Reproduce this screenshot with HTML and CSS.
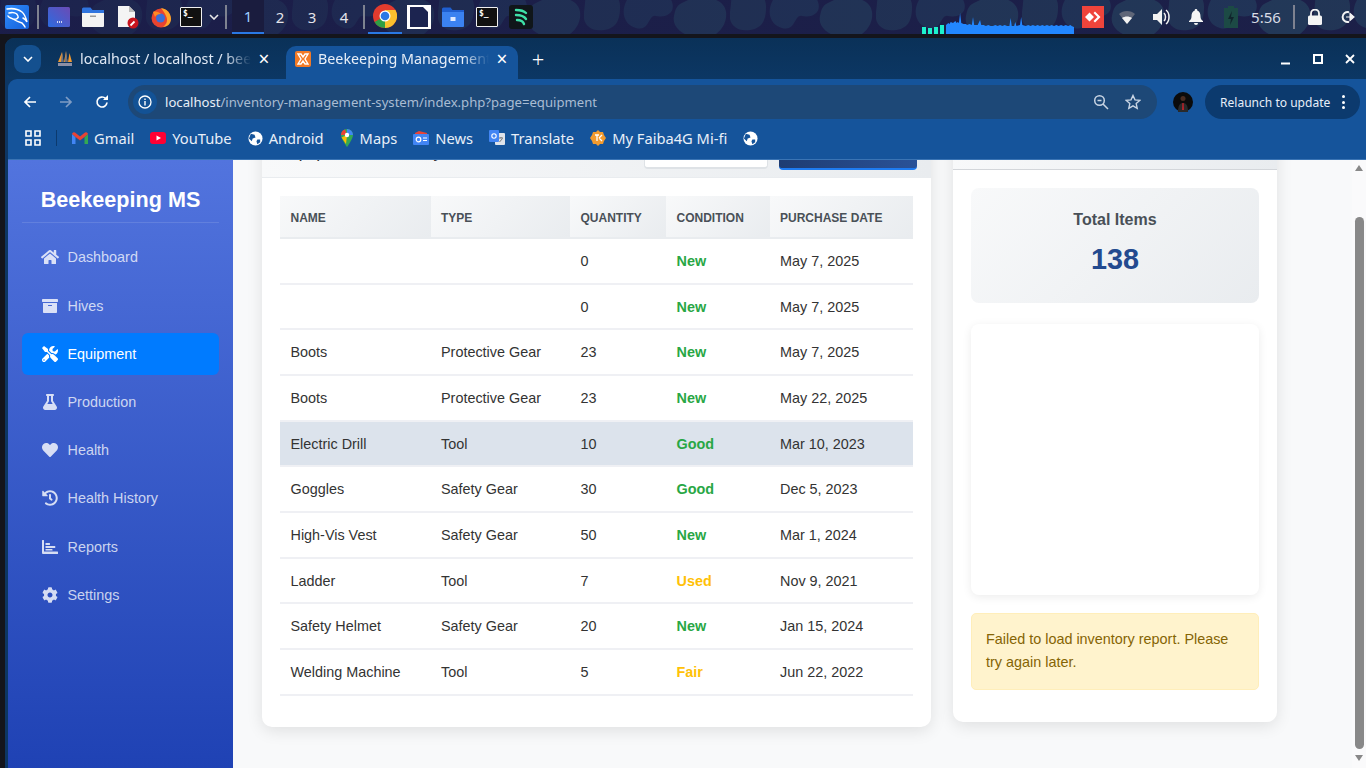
FILE: index.html
```html
<!DOCTYPE html>
<html lang="en">
<head>
<meta charset="utf-8">
<title>Beekeeping Management</title>
<link rel="stylesheet" href="styles.css">
</head>
<body>
<header class="taskbar">
  <svg class="wall" width="1366" height="34" aria-hidden="true">
    <defs>
      <pattern id="blobs" width="146" height="64" patternUnits="userSpaceOnUse">
        <path d="M6 -8c16-6 30 2 30 14s-2 22-16 24-22-6-20-18 0-17 6-20z" fill="#233a58"/>
        <path d="M48 -12c20-2 36 2 40 14s-8 16-16 14-6 16-20 12-14-18-10-26 0-13 6-14z" fill="#22395a"/>
        <path d="M100 2c14-8 40-6 42 10s-14 30-30 26-24-12-22-22 4-11 10-14z" fill="#243e5b"/>
        <path d="M24 40c14-6 38-4 40 8s-16 18-30 16-24-20-10-24z" fill="#22395a"/>
        <path d="M80 36c10-2 22 2 24 10s-8 16-18 14-16-22-6-24z" fill="#233a58"/>
      </pattern>
      <linearGradient id="fade" x1="0" x2="1" y1="0" y2="0">
        <stop offset="0" stop-color="#1b1d4a" stop-opacity=".8"/>
        <stop offset=".4" stop-color="#1b1d4a" stop-opacity=".45"/>
        <stop offset="1" stop-color="#1b1d4a" stop-opacity=".15"/>
      </linearGradient>
    </defs>
    <rect width="1366" height="34" fill="url(#blobs)"/>
    <rect width="1366" height="34" fill="url(#fade)"/>
  </svg>

  <div class="slot s-kali">
    <svg viewBox="0 0 24 24" width="24" height="24"><defs><linearGradient id="kali" x1="0" x2="1" y1="0" y2="1"><stop offset="0" stop-color="#2f8cff"/><stop offset="1" stop-color="#1560d8"/></linearGradient></defs><rect width="24" height="24" rx="2" fill="url(#kali)"/><path d="M2 4c6-1 11 0 15 3 3 2.500 4 6 5 10-1-2-2-3-4-4M4 8c4-1 8 0 9 3 1 2-2 4-5 3 3 2 6 3 9 4 1 1 2 2 3 4M8 14c-2-1-4-1-5-3" fill="none" stroke="#fff" stroke-width="1.500" stroke-linecap="round"/></svg>
  </div>
  <span class="tsep"></span>
  <div class="slot"><svg viewBox="0 0 22 20" width="22" height="20"><defs><linearGradient id="app1" x1="0" x2="1" y1="1" y2="0"><stop offset="0" stop-color="#2d6be0"/><stop offset="1" stop-color="#6b4bb5"/></linearGradient></defs><rect width="22" height="20" rx="1.500" fill="url(#app1)"/><path d="M9 15h5" stroke="#fff" stroke-width="1.500" stroke-dasharray="1 1"/></svg></div>
  <div class="slot"><svg viewBox="0 0 22 20" width="22" height="20"><path d="M0 2a1.500 1.500 0 0 1 1.500-1.500h7l2 2.500H22v5H0z" fill="#2f74df"/><path d="M0 6h22v13a1 1 0 0 1-1 1H1a1 1 0 0 1-1-1z" fill="#f3f3f3"/><rect x="8" y="8.500" width="6" height="1.500" fill="#9a9a9a"/></svg></div>
  <div class="slot s-doc"><svg viewBox="0 0 22 24" width="22" height="24"><path d="M1 1h11l6 6v15H1z" fill="#f4f4f4"/><path d="M12 1l6 6h-6z" fill="#bbb"/><circle cx="16" cy="18" r="5.500" fill="#c8141e"/><path d="M13.500 20.500l4-4" stroke="#fff" stroke-width="1.800"/></svg></div>
  <div class="slot s-fox"><svg viewBox="0 0 22 22" width="22" height="22"><circle cx="11" cy="12" r="9.500" fill="#e8442f"/><path d="M11 2c6 1 10 5 10 11 0 5-4 8-8 8 4-3 5-7 3-11-1-3-3-5-5-8z" fill="#ffa52a"/><circle cx="10.500" cy="12" r="4.500" fill="#3a6fd8"/><path d="M3 6c3-1 6 0 8 2-3 0-5 1-6 3z" fill="#ff8a24"/></svg></div>
  <div class="slot s-term"><span class="term">$_</span></div>
  <div class="slot s-chev"><svg viewBox="0 0 10 6" width="10" height="6"><path d="M1 1l4 4 4-4" fill="none" stroke="#e8e8e8" stroke-width="1.600"/></svg></div>
  <span class="tsep s-sep2"></span>
  <nav class="workspaces">
    <span class="ws ws-on">1</span><span class="ws">2</span><span class="ws">3</span><span class="ws">4</span>
  </nav>
  <span class="tsep s-sep3"></span>
  <div class="slot s-chrome"><svg viewBox="0 0 24 24" width="24" height="24"><circle cx="12" cy="12" r="12" fill="#e33b2e"/><path d="M12 12L1.600 18A12 12 0 0 0 12 24c1 0 2 0 3-.4z" fill="#2f9e44"/><path d="M12 6h10.400A12 12 0 0 1 12 24z" fill="#fbc02d"/><circle cx="12" cy="12" r="5.500" fill="#fff"/><circle cx="12" cy="12" r="4.300" fill="#2a78e4"/></svg></div>
  <div class="slot"><svg viewBox="0 0 24 24" width="24" height="24"><rect width="24" height="24" fill="#fff"/><path d="M3 2h13l5 5v15H3z" fill="#1c2450"/></svg></div>
  <div class="slot"><svg viewBox="0 0 22 20" width="22" height="20"><path d="M0 2a1.500 1.500 0 0 1 1.500-1.500h7l2 2.500H22v3H0z" fill="#1f5fd0"/><path d="M0 5h22v14a1 1 0 0 1-1 1H1a1 1 0 0 1-1-1z" fill="#3b82f0"/><rect x="8.500" y="10" width="5" height="4" fill="#dfeaff"/></svg></div>
  <div class="slot"><span class="term">$_</span></div>
  <div class="slot"><span class="spiral"><svg viewBox="0 0 14 18" width="14" height="18"><path d="M2 2c4 0 8 1 10 3M2 7c4 0 8 1 10 4M3 12c3 0 6 1 7 4" fill="none" stroke="#3fe0a8" stroke-width="2.400" stroke-linecap="round"/></svg></span></div>

  <div class="tray">
    <span class="netbars"><i class="nb1"></i><i class="nb2"></i><i class="nb3"></i><i class="nb4"></i></span>
    <svg class="graph" viewBox="0 0 109 22" width="128" height="22" preserveAspectRatio="none"><path d="M0 22V13l2-2 1 1 1-2 2 1 2-2 1 2 1-1 1 1 1-10 1 10 2 1 2 0 1 1 2-1 2 1 1-8 1 8 3 0 2-5 1 5 2 0 2 1 2-1 2 1 2 0 2-1 2 1 2-1 2 1 2-1 2 1 2 0 1-8 1 8 2 0 1-4 1 4 3-1 1-8 1 8 3 1 2-1 2 1 2-1 2 1 2-1 2 1 2-1 2 1 2-1 2 1 2-1 2 1 2-1 2 1 2-1 2 1 2-1 2 1 2-1 1 1 2 1V22z" fill="#2287ff"/></svg>
    <div class="slot s-any"><svg viewBox="0 0 22 22" width="22" height="22"><rect width="22" height="22" fill="#ef443b"/><path d="M3 11l4.500-4.500L12 11l-4.500 4.500zM13 5.500l5.500 5.500-5.500 5.500-1.500-1.500 4-4-4-4z" fill="#fff"/></svg></div>
    <div class="slot s-wifi"><svg viewBox="0 0 16 14" width="16" height="14"><path d="M0 4c4-4 12-4 16 0l-8 10z" fill="#5f6678"/><path d="M3 8c3-2 7-2 10 0l-5 6z" fill="#f2f2f2"/></svg></div>
    <div class="slot s-vol"><svg viewBox="0 0 18 18" width="18" height="18"><path d="M0 6h4l5-5v16l-5-5H0z" fill="#f2f2f2"/><path d="M11 5c2 2 2 6 0 8M13 2c4 3 4 11 0 14" fill="none" stroke="#f2f2f2" stroke-width="1.500"/></svg></div>
    <div class="slot s-bell"><svg viewBox="0 0 14 16" width="14" height="16"><path d="M7 0a1.200 1.200 0 0 1 1.200 1.500C11 2.500 11.500 5 11.500 7.500c0 2 1 3.500 2.500 4.500v1H0v-1c1.500-1 2.500-2.500 2.500-4.500 0-2.500.5-5 3.300-6A1.200 1.200 0 0 1 7 0zM5 14h4a2 2 0 0 1-4 0z" fill="#f4f4f4"/></svg></div>
    <div class="slot s-batt"><svg viewBox="0 0 14 22" width="14" height="22"><path d="M4 0h6v2h4v20H0V2h4z" fill="#1c4a45"/><path d="M8 5l-4 8h3l-1 6 4-8H7z" fill="#10242c"/></svg></div>
    <span class="clock">5:56</span>
    <span class="tsep s-sep4"></span>
    <div class="slot s-lock"><svg viewBox="0 0 14 16" width="14" height="16"><path d="M3 7V4.500a4 4 0 0 1 8 0V7" fill="none" stroke="#f4f4f4" stroke-width="1.800"/><rect y="6.500" width="14" height="9.500" rx="1.500" fill="#f4f4f4"/></svg></div>
    <div class="slot s-out"><svg viewBox="0 0 16 14" width="16" height="14"><path d="M9 2.200a5 5 0 1 0 0 9.600" fill="none" stroke="#f4f4f4" stroke-width="2"/><path d="M6 7h6M10 3.500L14 7l-4 3.500z" fill="#f4f4f4" stroke="#f4f4f4" stroke-width="1.200"/></svg></div>
  </div>
</header>

<div class="window">
  <div class="tabstrip">
    <button class="tabsearch"><svg viewBox="0 0 10 6" width="10" height="6"><path d="M1 1l4 4 4-4" fill="none" stroke="#fff" stroke-width="1.600"/></svg></button>
    <div class="tab tab-off">
      <svg class="favicon" viewBox="0 0 16 16" width="16" height="16"><path d="M1 11L5 1l1.500 10zM7 11L9 0l1.500 11zM11 11l1.500-9L15 11z" fill="#f29a2e"/><path d="M5 1L4 11h2.500zM9 0L8 11h2.500z" fill="#6b6f80"/><rect x="1" y="12" width="14" height="3" fill="#8b8fa5"/></svg>
      <span class="tabtitle">localhost / localhost / beekeeping</span>
      <span class="tabx">×</span>
    </div>
    <div class="tab tab-on">
      <svg class="favicon" viewBox="0 0 16 16" width="16" height="16"><rect width="16" height="16" rx="2" fill="#f27a26"/><path d="M3 3h3l2 3 2-3h3l-3 5 3 5h-3L8 10l-2 3H3l3-5z" fill="none" stroke="#fff" stroke-width="1.400"/></svg>
      <span class="tabtitle">Beekeeping Management System</span>
      <span class="tabx">×</span>
    </div>
    <span class="newtab">+</span>
    <div class="winctl">
      <svg viewBox="0 0 12 12" width="12" height="12"><path d="M1 10.500h9" stroke="#fff" stroke-width="2"/></svg>
      <svg viewBox="0 0 12 12" width="12" height="12"><rect x="2" y="2" width="8" height="8" fill="none" stroke="#fff" stroke-width="2"/></svg>
      <svg viewBox="0 0 12 12" width="12" height="12"><path d="M2 2l8 8M10 2l-8 8" stroke="#fff" stroke-width="1.800"/></svg>
    </div>
  </div>

  <div class="frame">
    <div class="toolbar">
      <span class="navbtn"><svg viewBox="0 0 14 14" width="14" height="14"><path d="M13 7H2M7 2L2 7l5 5" fill="none" stroke="#fff" stroke-width="1.700"/></svg></span>
      <span class="navbtn"><svg viewBox="0 0 14 14" width="14" height="14"><path d="M1 7h11M7 2l5 5-5 5" fill="none" stroke="#7f9cc4" stroke-width="1.700"/></svg></span>
      <span class="navbtn"><svg viewBox="0 0 14 14" width="14" height="14"><path d="M12 7.500A5 5 0 1 1 10.500 3.400" fill="none" stroke="#fff" stroke-width="1.700"/><path d="M8 5h5V0z" fill="#fff"/></svg></span>
      <div class="omnibox">
        <span class="siteinfo"><svg viewBox="0 0 14 14" width="14" height="14"><circle cx="7" cy="7" r="6" fill="none" stroke="#fff" stroke-width="1.300"/><path d="M7 6v4.500M7 3.500v1.500" stroke="#fff" stroke-width="1.400"/></svg></span>
        <span class="url"><b>localhost</b>/inventory-management-system/index.php?page=equipment</span>
        <svg class="zoomi" viewBox="0 0 16 16" width="16" height="16"><circle cx="6.500" cy="6.500" r="4.800" fill="none" stroke="#c9d5e4" stroke-width="1.500"/><path d="M10 10l5 5M4.500 6.500h4" stroke="#c9d5e4" stroke-width="1.500"/></svg>
        <svg class="star" viewBox="0 0 16 16" width="16" height="16"><path d="M8 1.500l2 4.400 4.800.5-3.600 3.200 1 4.700L8 11.900l-4.200 2.400 1-4.700L1.200 6.400 6 5.900z" fill="none" stroke="#c9d5e4" stroke-width="1.400"/></svg>
      </div>
      <span class="avatar"><svg viewBox="0 0 20 20" width="20" height="20"><circle cx="10" cy="10" r="10" fill="#0b0b0b"/><circle cx="10" cy="6.500" r="2.500" fill="#4a2c20"/><path d="M5 20c0-7 2-9 5-9s5 2 5 9z" fill="#2a2a2a"/><path d="M9.300 11h1.400l.3 7H9z" fill="#b4232a"/></svg></span>
      <div class="relaunch"><span>Relaunch to update</span><span class="dots"><i></i><i></i><i></i></span></div>
    </div>

    <div class="bookmarks">
      <svg viewBox="0 0 16 16" width="16" height="16"><path d="M1 1h5v5H1zM10 1h5v5h-5zM1 10h5v5H1zM10 10h5v5h-5z" fill="none" stroke="#fff" stroke-width="1.600"/></svg>
      <span class="bmsep"></span>
      <a class="bm bm-first"><svg viewBox="0 0 16 12" width="16" height="12"><path d="M0 2v10h3.500V5z" fill="#4285f4"/><path d="M12.500 5v7H16V2z" fill="#34a853"/><path d="M0 2a2 2 0 0 1 3-1.500l5 4 5-4A2 2 0 0 1 16 2l-3.500 3L8 8.500 3.500 5z" fill="#ea4335"/></svg>Gmail</a>
      <a class="bm"><svg viewBox="0 0 16 12" width="16" height="12"><rect width="16" height="12" rx="3" fill="#ff0033"/><path d="M6.500 3.500v5L11 6z" fill="#fff"/></svg>YouTube</a>
      <a class="bm"><svg viewBox="0 0 16 16" width="15" height="15"><circle cx="8" cy="8" r="7.500" fill="#fff"/><path d="M3 3l4 1 1 3-3 1-1 3-3-3zM10 9l3 0 0 3-3 2-1-3z" fill="#15549b"/></svg>Android</a>
      <a class="bm"><svg viewBox="0 0 14 18" width="14" height="18"><path d="M7 0a6 6 0 0 0-6 6c0 4 6 12 6 12s6-8 6-12a6 6 0 0 0-6-6z" fill="#34a853"/><path d="M7 0a6 6 0 0 1 6 6l-6 0z" fill="#4285f4"/><path d="M1 6a6 6 0 0 1 4-5.600L7 6z" fill="#ea4335"/><path d="M1.500 8.500L7 6l-1 9z" fill="#fbbc04"/><circle cx="7" cy="6" r="2.200" fill="#fff"/></svg>Maps</a>
      <a class="bm"><svg viewBox="0 0 16 16" width="16" height="16"><path d="M2 3l4-2 8 2v3H2z" fill="#ea4335"/><rect x="0" y="4" width="16" height="11" rx="1" fill="#4285f4"/><path d="M10 8h4M10 10.500h4" stroke="#fff"/><circle cx="5.500" cy="9.500" r="2.300" fill="none" stroke="#fff" stroke-width="1.200"/></svg>News</a>
      <a class="bm"><svg viewBox="0 0 16 16" width="16" height="16"><rect x="6" y="3" width="10" height="12" rx="1" fill="#dfe3ea"/><rect width="10" height="12" rx="1" fill="#4285f4"/><circle cx="5" cy="6" r="2.200" fill="none" stroke="#fff" stroke-width="1.100"/><path d="M10 8h4M12 7v1M10.500 12l3-3.500" stroke="#777"/></svg>Translate</a>
      <a class="bm"><svg viewBox="0 0 16 16" width="16" height="16"><path d="M8 0l2 2h3l1 3 2 3-2 3-1 3h-3l-2 2-2-2H3l-1-3-2-3 2-3 1-3h3z" fill="#f29a2e"/><path d="M5 5h4M7 5v6M9 8l3-3M9 8l3 3" stroke="#fff" stroke-width="1.300" fill="none"/></svg>My Faiba4G Mi-fi</a>
      <a class="bm"><svg viewBox="0 0 16 16" width="15" height="15"><circle cx="8" cy="8" r="7.500" fill="#fff"/><path d="M3 3l4 1 1 3-3 1-1 3-3-3zM10 9l3 0 0 3-3 2-1-3z" fill="#15549b"/></svg></a>
    </div>

    <div class="page">
      <aside class="sidebar">
        <h1 class="brand">Beekeeping MS</h1>
        <ul class="nav">
          <li><a class="navlink"><span class="ico"><svg viewBox="0 0 576 512"><path d="M280.37 148.26L96 300.11V464a16 16 0 0 0 16 16l112.06-.29a16 16 0 0 0 15.92-16V368a16 16 0 0 1 16-16h64a16 16 0 0 1 16 16v95.64a16 16 0 0 0 16 16.05L464 480a16 16 0 0 0 16-16V300L295.67 148.26a12.19 12.19 0 0 0-15.3 0zM571.6 251.47L488 182.56V44.05a12 12 0 0 0-12-12h-56a12 12 0 0 0-12 12v72.61L318.47 43a48 48 0 0 0-61 0L4.34 251.47a12 12 0 0 0-1.6 16.9l25.5 31A12 12 0 0 0 45.15 301l235.22-193.74a12.19 12.19 0 0 1 15.3 0L530.9 301a12 12 0 0 0 16.9-1.6l25.5-31a12 12 0 0 0-1.7-16.93z"/></svg></span>Dashboard</a></li>
          <li><a class="navlink"><span class="ico"><svg viewBox="0 0 512 512"><path d="M32 448c0 17.7 14.300 32 32 32h384c17.700 0 32-14.300 32-32V160H32v288zm160-212c0-6.600 5.400-12 12-12h104c6.600 0 12 5.400 12 12v8c0 6.600-5.400 12-12 12H204c-6.600 0-12-5.400-12-12v-8zM480 32H32C14.300 32 0 46.300 0 64v48c0 8.800 7.200 16 16 16h480c8.800 0 16-7.200 16-16V64c0-17.700-14.300-32-32-32z"/></svg></span>Hives</a></li>
          <li><a class="navlink active"><span class="ico"><svg viewBox="0 0 512 512"><path d="M501.100 395.700L384 278.600c-23.100-23.100-57.600-27.600-85.400-13.900L192 158.100V96L64 0 0 64l96 128h62.100l106.600 106.600c-13.600 27.800-9.200 62.300 13.900 85.400l117.100 117.100c14.600 14.600 38.200 14.600 52.700 0l52.700-52.700c14.500-14.600 14.500-38.200 0-52.700zM331.700 225c28.300 0 54.900 11 74.900 31l19.400 19.400c15.800-6.900 30.800-16.500 43.800-29.500 37.100-37.100 49.700-89.300 37.900-136.700-2.200-9-13.500-12.100-20.100-5.500l-74.400 74.400-67.900-11.300L334 98.900l74.400-74.400c6.600-6.600 3.400-17.900-5.700-20.200-47.400-11.700-99.600.9-136.600 37.900-28.500 28.500-41.900 66.100-41.200 103.600l82.100 82.100c8.100-1.900 16.500-2.900 24.700-2.900zm-103.900 82l-56.700-56.700L18.700 402.800c-25 25-25 65.500 0 90.500s65.500 25 90.500 0l123.600-123.600c-7.600-19.900-9.900-41.600-5-62.700zM64 472c-13.200 0-24-10.800-24-24 0-13.300 10.700-24 24-24s24 10.700 24 24c0 13.200-10.700 24-24 24z"/></svg></span>Equipment</a></li>
          <li><a class="navlink"><span class="ico"><svg viewBox="0 0 448 512"><path d="M437.200 403.500L320 215V64h8c13.300 0 24-10.700 24-24V24c0-13.300-10.700-24-24-24H120c-13.300 0-24 10.700-24 24v16c0 13.300 10.700 24 24 24h8v151L10.800 403.500C-18.500 450.600 15.300 512 70.900 512h306.200c55.700 0 89.400-61.500 60.100-108.500zM137.900 320l48.200-77.600c3.700-5.200 5.800-11.600 5.800-18.400V64h64v160c0 6.900 2.200 13.200 5.800 18.400l48.200 77.600h-172z"/></svg></span>Production</a></li>
          <li><a class="navlink"><span class="ico"><svg viewBox="0 0 512 512"><path d="M462.300 62.600C407.500 15.900 326 24.300 275.700 76.200L256 96.500l-19.700-20.300C186.100 24.300 104.500 15.900 49.700 62.600c-62.800 53.600-66.100 149.800-9.900 207.900l193.500 199.800c12.500 12.900 32.800 12.900 45.300 0l193.500-199.800c56.300-58.100 53-154.300-9.800-207.900z"/></svg></span>Health</a></li>
          <li><a class="navlink"><span class="ico"><svg viewBox="0 0 512 512"><path d="M504 255.531c.253 136.640-111.180 248.372-247.820 248.468-59.015.042-113.223-20.530-155.822-54.911-11.077-8.940-11.905-25.541-1.839-35.607l11.267-11.267c8.609-8.609 22.353-9.551 31.891-1.984C173.062 425.135 212.781 440 256 440c101.705 0 184-82.311 184-184 0-101.705-82.311-184-184-184-48.814 0-93.149 18.969-126.068 49.932l50.754 50.754c10.080 10.080 2.941 27.314-11.313 27.314H24c-8.837 0-16-7.163-16-16V38.627c0-14.254 17.234-21.393 27.314-11.314l49.372 49.372C129.209 34.136 189.552 8 256 8c136.810 0 247.747 110.780 248 247.531zm-180.912 78.784l9.823-12.630c8.138-10.463 6.253-25.542-4.210-33.679L288 256.349V152c0-13.255-10.745-24-24-24h-16c-13.255 0-24 10.745-24 24v135.651l65.409 50.874c10.463 8.137 25.541 6.253 33.679-4.210z"/></svg></span>Health History</a></li>
          <li><a class="navlink"><span class="ico"><svg viewBox="0 0 512 512"><path d="M0 48a16 16 0 0 1 16-16h32a16 16 0 0 1 16 16v352h432a16 16 0 0 1 16 16v48a16 16 0 0 1-16 16H32a32 32 0 0 1-32-32zM112 128h130a14 14 0 0 1 14 14v36a14 14 0 0 1-14 14H112zM112 224h300a14 14 0 0 1 14 14v36a14 14 0 0 1-14 14H112zM112 320h210a14 14 0 0 1 14 14v36H112z"/></svg></span>Reports</a></li>
          <li><a class="navlink"><span class="ico"><svg viewBox="0 0 512 512"><path d="M487.400 315.700l-42.600-24.600c4.300-23.200 4.300-47 0-70.200l42.600-24.600c4.900-2.800 7.100-8.600 5.500-14-11.100-35.600-30-67.800-54.700-94.600-3.800-4.100-10-5.100-14.800-2.300L380.800 110c-17.900-15.400-38.500-27.300-60.800-35.100V25.800c0-5.600-3.900-10.500-9.400-11.700-36.700-8.200-74.300-7.800-109.200 0-5.500 1.200-9.400 6.100-9.400 11.700V75c-22.200 7.900-42.800 19.800-60.800 35.100L88.700 85.500c-4.900-2.800-11-1.900-14.800 2.300-24.700 26.700-43.600 58.900-54.700 94.600-1.700 5.400.6 11.200 5.500 14L67.300 221c-4.300 23.200-4.300 47 0 70.200l-42.600 24.600c-4.900 2.800-7.100 8.600-5.500 14 11.100 35.600 30 67.800 54.700 94.600 3.800 4.100 10 5.100 14.800 2.300l42.600-24.600c17.900 15.400 38.500 27.300 60.800 35.100v49.200c0 5.600 3.900 10.500 9.400 11.700 36.700 8.200 74.300 7.800 109.200 0 5.500-1.200 9.400-6.100 9.400-11.700v-49.200c22.200-7.900 42.800-19.800 60.800-35.100l42.600 24.600c4.900 2.800 11 1.900 14.800-2.300 24.700-26.700 43.600-58.900 54.700-94.600 1.500-5.500-.7-11.300-5.600-14.100zM256 336c-44.100 0-80-35.900-80-80s35.900-80 80-80 80 35.900 80 80-35.900 80-80 80z"/></svg></span>Settings</a></li>
        </ul>
      </aside>

      <main class="main">
        <section class="card card-list">
          <div class="card-head">
            <h2 class="card-title">Equipment Inventory</h2>
            <div class="head-tools">
              <div class="filter">All Types</div>
              <button class="btn-add">Add Equipment</button>
            </div>
          </div>
          <div class="card-body">
            <table class="grid">
              <colgroup><col class="c1"><col class="c2"><col class="c3"><col class="c4"><col class="c5"></colgroup>
              <thead><tr><th>Name</th><th>Type</th><th>Quantity</th><th>Condition</th><th>Purchase Date</th></tr></thead>
              <tbody>
                <tr><td></td><td></td><td>0</td><td class="ok">New</td><td>May 7, 2025</td></tr>
                <tr><td></td><td></td><td>0</td><td class="ok">New</td><td>May 7, 2025</td></tr>
                <tr><td>Boots</td><td>Protective Gear</td><td>23</td><td class="ok">New</td><td>May 7, 2025</td></tr>
                <tr><td>Boots</td><td>Protective Gear</td><td>23</td><td class="ok">New</td><td>May 22, 2025</td></tr>
                <tr class="hover"><td>Electric Drill</td><td>Tool</td><td>10</td><td class="ok">Good</td><td>Mar 10, 2023</td></tr>
                <tr><td>Goggles</td><td>Safety Gear</td><td>30</td><td class="ok">Good</td><td>Dec 5, 2023</td></tr>
                <tr><td>High-Vis Vest</td><td>Safety Gear</td><td>50</td><td class="ok">New</td><td>Mar 1, 2024</td></tr>
                <tr><td>Ladder</td><td>Tool</td><td>7</td><td class="warn">Used</td><td>Nov 9, 2021</td></tr>
                <tr><td>Safety Helmet</td><td>Safety Gear</td><td>20</td><td class="ok">New</td><td>Jan 15, 2024</td></tr>
                <tr><td>Welding Machine</td><td>Tool</td><td>5</td><td class="warn">Fair</td><td>Jun 22, 2022</td></tr>
              </tbody>
            </table>
          </div>
        </section>

        <section class="card card-side">
          <div class="card-head card-head-side"><h2 class="card-title">Inventory Report</h2></div>
          <div class="card-body">
            <div class="stat">
              <h3 class="stat-label">Total Items</h3>
              <div class="stat-value">138</div>
            </div>
            <div class="chart"></div>
            <div class="alert">Failed to load inventory report. Please try again later.</div>
          </div>
        </section>
      </main>

      <div class="scrollbar">
        <span class="arrow-up"></span>
        <span class="thumb"></span>
        <span class="arrow-down"></span>
      </div>
    </div>
  </div>
</div>
</body>
</html>
```

FILE: styles.css
```css
* { box-sizing: border-box; }
html, body { margin: 0; padding: 0; height: 100%; }
body {
  width: 1366px; height: 768px; overflow: hidden;
  background: #14151c;
  display: flex; flex-direction: column;
  font-family: "Liberation Sans", Arial, sans-serif;
}
svg { display: block; flex: none; }

/* desktop panel */
.taskbar {
  position: relative; height: 34px; flex: none;
  background: #1c2048;
  display: flex; align-items: center;
  color: #f2f2f2;
  font-family: "Noto Sans", sans-serif;
}
.wall { position: absolute; left: 0; top: 0; }
.slot { position: relative; width: 34px; height: 34px; display: flex; align-items: center; justify-content: center; flex: none; }
.tsep { position: relative; width: 2px; height: 24px; background: #7e8290; flex: none; margin: 0 3px; }
.s-sep2 { margin: 0 4px 0 3px; }
.s-sep3 { margin: 0 3px; }
.s-doc { width: 35px; }
.s-fox { width: 32px; }
.s-term { width: 28px; }
.s-chev { width: 17px; }
.term {
  width: 22px; height: 20px; background: #111; border: 1px solid #f0f0f0;
  font: 700 8px/12px "DejaVu Sans Mono", monospace; color: #fff; padding-left: 2px; display: block; border-radius: 1px;
}
.spiral { width: 24px; height: 24px; background: #10161a; border-radius: 3px; display: flex; align-items: center; justify-content: center; }
.workspaces { position: relative; display: flex; height: 34px; flex: none; margin-left: 1px; }
.ws { width: 32px; height: 34px; display: flex; align-items: center; justify-content: center; font-size: 15px; color: #e4e4ea; padding-bottom: 1px; }
.ws-on { background: #1a1c3e; border-bottom: 2px solid #2a78e4; color: #9fd0ff; }
.s-chrome { border-bottom: 2px solid #2a78e4; }
.tray { position: relative; margin-left: auto; display: flex; align-items: center; height: 34px; padding-right: 2px; }
.netbars { display: flex; align-items: flex-end; gap: 2px; height: 34px; margin-right: 2px; }
.netbars i { display: block; width: 4px; background: #1df0cc; }
.nb1 { height: 7px; } .nb2 { height: 6px; } .nb3 { height: 7px; } .nb4 { height: 9px; }
.graph { align-self: flex-end; margin-right: 2px; }
.s-wifi, .s-vol, .s-batt, .s-any, .s-bell { width: 34.5px; }
.clock { width: 36px; text-align: center; font-size: 15px; color: #d9dde6; }
.s-sep4 { margin: 0 3px 0 9px; height: 24px; }
.s-lock { width: 34px; }
.s-out { width: 32px; }

/* browser */
.window {
  flex: 1; min-height: 0; margin-top: 4px; margin-left: 5px;
  border-radius: 9px 0 0 0;
  background: #0d3663;
  display: flex; flex-direction: column;
}
.tabstrip {
  height: 41px; flex: none; position: relative;
  background: linear-gradient(#0a3158, #0c3764);
  border-radius: 9px 0 0 0;
  display: flex; align-items: flex-end;
  color: #fff;
  padding-left: 9px;
  font-family: "Noto Sans", sans-serif;
}
.tabsearch { width: 27px; height: 28px; margin-bottom: 6px; border: 0; border-radius: 9px; background: #14508f; display: flex; align-items: center; justify-content: center; padding: 0; flex: none; }
.tab { width: 232px; height: 33px; display: flex; align-items: center; padding: 0 8px 8px 9px; font-size: 14.3px; flex: none; color: #dfe8f4; }
.tab-off { width: 241px; margin-left: 4px; padding-left: 12px; padding-right: 14px; }
.tab-on { background: #15549b; border-radius: 10px 10px 0 0; color: #e8eff8; }
.tabtitle {
  flex: 1; min-width: 0; margin-left: 7px; white-space: nowrap; overflow: hidden;
  -webkit-mask-image: linear-gradient(to right, #000 85%, transparent 100%);
  mask-image: linear-gradient(to right, #000 85%, transparent 100%);
}
.tabx { width: 16px; text-align: center; font-size: 19px; line-height: 18px; margin-left: 5px; color: #fff; }
.newtab { font-size: 22px; line-height: 24px; margin-left: 13px; margin-bottom: 8px; width: 14px; text-align: center; font-weight: 300; }
.winctl { margin-left: auto; display: flex; gap: 20px; padding-right: 10px; margin-bottom: 14px; }

.frame { flex: 1; min-height: 0; display: flex; flex-direction: column; padding-left: 3px; }
.toolbar {
  height: 40px; flex: none; background: #15549b; border-radius: 9px 0 0 0;
  display: flex; align-items: flex-end; padding: 0 6px 0 4px;
  font-family: "Noto Sans", sans-serif;
}
.navbtn { width: 36px; height: 34px; display: flex; align-items: center; justify-content: center; flex: none; }
.omnibox {
  margin-left: 8px; width: 1029px; height: 34px; border-radius: 17px;
  background: #1d4877; display: flex; align-items: center; padding-left: 5px; padding-right: 16px; flex: none;
}
.siteinfo { width: 24px; height: 24px; border-radius: 50%; background: #135295; display: flex; align-items: center; justify-content: center; flex: none; }
.url { margin-left: 8px; font-size: 13.13px; color: #a9bcd3; white-space: nowrap; }
.url b { font-weight: 400; color: #e8eff8; }
.zoomi { margin-left: auto; }
.star { margin-left: 16px; }
.avatar { margin: 0 12px 7px 16px; flex: none; }
.relaunch {
  width: 155px; height: 34px; border-radius: 17px; background: #0c3a6e; color: #e8eff8;
  display: flex; align-items: center; justify-content: space-between; padding: 0 15px 0 15px; font-size: 12.06px; flex: none;
}
.dots { display: flex; flex-direction: column; gap: 2.500px; }
.dots i { display: block; width: 3px; height: 3px; border-radius: 50%; background: #fff; }

.bookmarks {
  height: 41px; flex: none; background: #15549b; border-bottom: 1px solid #3a74b4;
  display: flex; align-items: center; padding: 0 0 2px 17px; color: #fff; font-size: 14.7px;
  font-family: "Noto Sans", sans-serif;
}
.bmsep { width: 1px; height: 16px; background: #0c3a6e; margin-left: 15px; flex: none; }
.bm { display: flex; align-items: center; gap: 6px; margin-left: 16px; white-space: nowrap; color: #e8eff8; }
.bm-first { margin-left: 15px; }

.page { flex: 1; min-height: 0; display: flex; background: #f8f9fa; overflow: hidden; }

/* sidebar */
.sidebar {
  width: 225px; flex: none;
  background: linear-gradient(#5274de, #1f42b4);
  padding: 0 14px;
}
.brand {
  margin: 0; height: 63px; padding-top: 25px; text-align: center;
  color: #fff; font-size: 21.6px; font-weight: 700; line-height: 30px;
  border-bottom: 1px solid rgba(255, 255, 255, .12);
}
.nav { list-style: none; margin: 0; padding: 13.600px 0 0; }
.nav li { margin-bottom: 6.500px; }
.navlink {
  height: 41.700px; display: flex; align-items: center; padding-left: 19px;
  border-radius: 6px; color: rgba(255, 255, 255, .75); font-size: 14.4px;
}
.navlink.active { background: #007bff; color: #fff; }
.ico { width: 18px; margin-right: 8.500px; flex: none; display: flex; justify-content: center; fill: rgba(255, 255, 255, .8); }
.ico svg { height: 16px; width: auto; }
.active .ico { fill: #fff; }

/* content */
.main {
  flex: 1; min-width: 0; display: flex; align-items: flex-start; gap: 22px;
  padding-left: 29px; margin-top: -34px;
}
.card { background: #fff; border-radius: 10px; box-shadow: 0 4px 16px rgba(0, 0, 0, .1); flex: none; }
.card-list { width: 669px; }
.card-side { width: 324px; }
.card-head {
  height: 52px; display: flex; align-items: center; justify-content: space-between;
  padding: 0 14px 0 19px;
  background: linear-gradient(90deg, #f8f9fa, #e9ecef);
  border-bottom: 1px solid #e9ecef; border-radius: 10px 10px 0 0;
}
.card-head-side { height: 44px; border-bottom: 1px solid #d3d6da; }
.card-title { margin: 0; font-size: 17.6px; font-weight: 400; color: #333; }
.head-tools { display: flex; align-items: center; gap: 11px; }
.filter {
  width: 124px; height: 34px; padding: 0 13px; background: #fff; border: 1px solid #dee2e6;
  border-bottom-width: 2px; border-radius: 4px; font-size: 14.4px; line-height: 32px; color: #333;
}
.btn-add {
  width: 138px; height: 36px; border: 0; border-bottom: 2px solid #1e7bf0; border-radius: 4px;
  padding: 2px 0 0 12px;
  background: linear-gradient(90deg, #1e3c72, #2a5298); color: #fff; font: 14.4px "Liberation Sans", sans-serif;
}
.card-body { padding: 18px 18px 32px; }
.card-list .card-body { padding-bottom: 31px; }
.grid { width: 633px; table-layout: fixed; border-collapse: separate; border-spacing: 0; font-size: 14.4px; color: #333; }
.c1 { width: 150.500px; } .c2 { width: 139.500px; } .c3 { width: 96px; } .c4 { width: 103.500px; } .c5 { width: 143.500px; }
.grid th {
  height: 43px; padding: 2px 10.500px 0; text-align: left; font-size: 12px; font-weight: 700;
  text-transform: uppercase; color: #495057;
  background: linear-gradient(135deg, #f8f9fa, #e9ecef);
  border-bottom: 2px solid #e9ecef;
}
.grid td { padding: 12px 10.500px 10px; line-height: 21.670px; border-bottom: 2px solid #eff0f4; }
.grid .hover td { background: #dce3ec; }
.ok { color: #28a745; font-weight: 700; }
.warn { color: #ffc107; font-weight: 700; }

.stat {
  height: 115px; border-radius: 8px; text-align: center;
  background: linear-gradient(135deg, #f8f9fa, #e9ecef);
  padding-top: 22px;
}
.stat-label { margin: 0; font-size: 16px; line-height: 20px; font-weight: 700; color: #495057; }
.stat-value { margin-top: 9px; font-size: 28.800px; line-height: 40px; font-weight: 700; color: #234a8f; }
.chart { height: 271px; margin-top: 21px; border-radius: 8px; background: #fff; box-shadow: 0 2px 10px rgba(0, 0, 0, .08); }
.alert {
  margin-top: 18px; height: 77px; padding: 14px 14px; background: #fff3cd; border: 1px solid #ffeeba;
  border-radius: 5px; color: #856404; font-size: 14.4px; line-height: 23px;
}

/* scrollbar */
.scrollbar {
  margin-left: auto; width: 14px; flex: none; background: #fafafb;
  display: flex; flex-direction: column; align-items: center; padding: 5px 0 7px;
}
.thumb { width: 9px; flex: 1; background: #888; border-radius: 5px; margin: 46px 0 6px; }
.arrow-up { width: 0; height: 0; border: 4.500px solid transparent; border-top: 0; border-bottom: 6px solid #888; }
.arrow-down { width: 0; height: 0; border: 4.500px solid transparent; border-bottom: 0; border-top: 6px solid #888; }
```
